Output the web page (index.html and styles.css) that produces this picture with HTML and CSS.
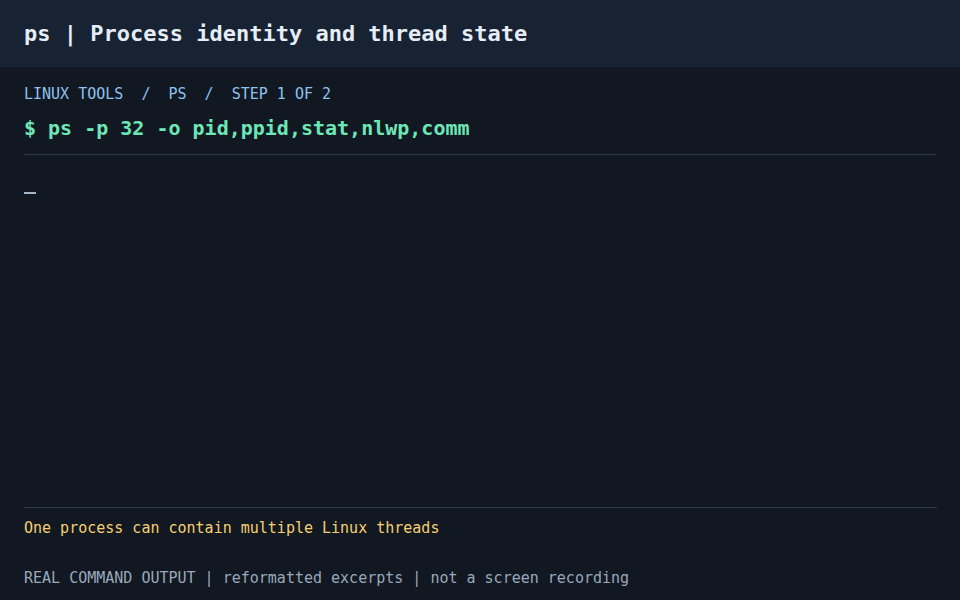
FILE: index.html
```html
<!DOCTYPE html>
<html lang="en">
<head>
<meta charset="utf-8">
<title>ps | Process identity and thread state</title>
<link rel="stylesheet" href="styles.css">
</head>
<body>
<div class="page">
  <header class="topbar">
    <h1 class="title">ps | Process identity and thread state</h1>
  </header>
  <main class="content">
    <div class="crumbs">LINUX TOOLS&nbsp;&nbsp;/&nbsp;&nbsp;PS&nbsp;&nbsp;/&nbsp;&nbsp;STEP 1 OF 2</div>
    <div class="command">$ ps -p 32 -o pid,ppid,stat,nlwp,comm</div>
    <div class="output"><span class="cursor"></span></div>
  </main>
  <footer class="footer">
    <div class="note">One process can contain multiple Linux threads</div>
    <div class="disclaimer">REAL COMMAND OUTPUT | reformatted excerpts | not a screen recording</div>
  </footer>
</div>
</body>
</html>
```
FILE: styles.css
```css
html, body {
  margin: 0;
  padding: 0;
  background: #111822;
}
body {
  font-family: "DejaVu Sans Mono", "Liberation Mono", monospace;
}
.page {
  width: 960px;
  height: 600px;
  display: flex;
  flex-direction: column;
  overflow: hidden;
}
.topbar {
  height: 67px;
  background: #172233;
  display: flex;
  align-items: center;
  padding: 0 24px;
  box-sizing: border-box;
}
.title {
  margin: 0;
  font-size: 22px;
  font-weight: bold;
  color: #e6edf6;
  line-height: 26px;
}
.content {
  flex: 1;
  padding: 18px 24px 0;
  display: flex;
  flex-direction: column;
}
.crumbs {
  font-size: 15px;
  line-height: 18px;
  color: #8cc3ee;
}
.command {
  margin-top: 13px;
  font-size: 20px;
  line-height: 24px;
  font-weight: bold;
  color: #6ee7b7;
  padding-bottom: 14px;
  border-bottom: 1px solid #263548;
}
.output {
  padding-top: 37px;
}
.cursor {
  display: block;
  width: 12px;
  height: 2px;
  background: #a3b3c8;
}
.footer {
  margin: 0 23px 0 24px;
  border-top: 1px solid #2e3a4b;
  padding: 11px 0 13px;
}
.note {
  font-size: 15px;
  line-height: 18px;
  color: #f6cf70;
}
.disclaimer {
  margin-top: 32px;
  font-size: 15px;
  line-height: 18px;
  color: #9aa8ba;
}
```
